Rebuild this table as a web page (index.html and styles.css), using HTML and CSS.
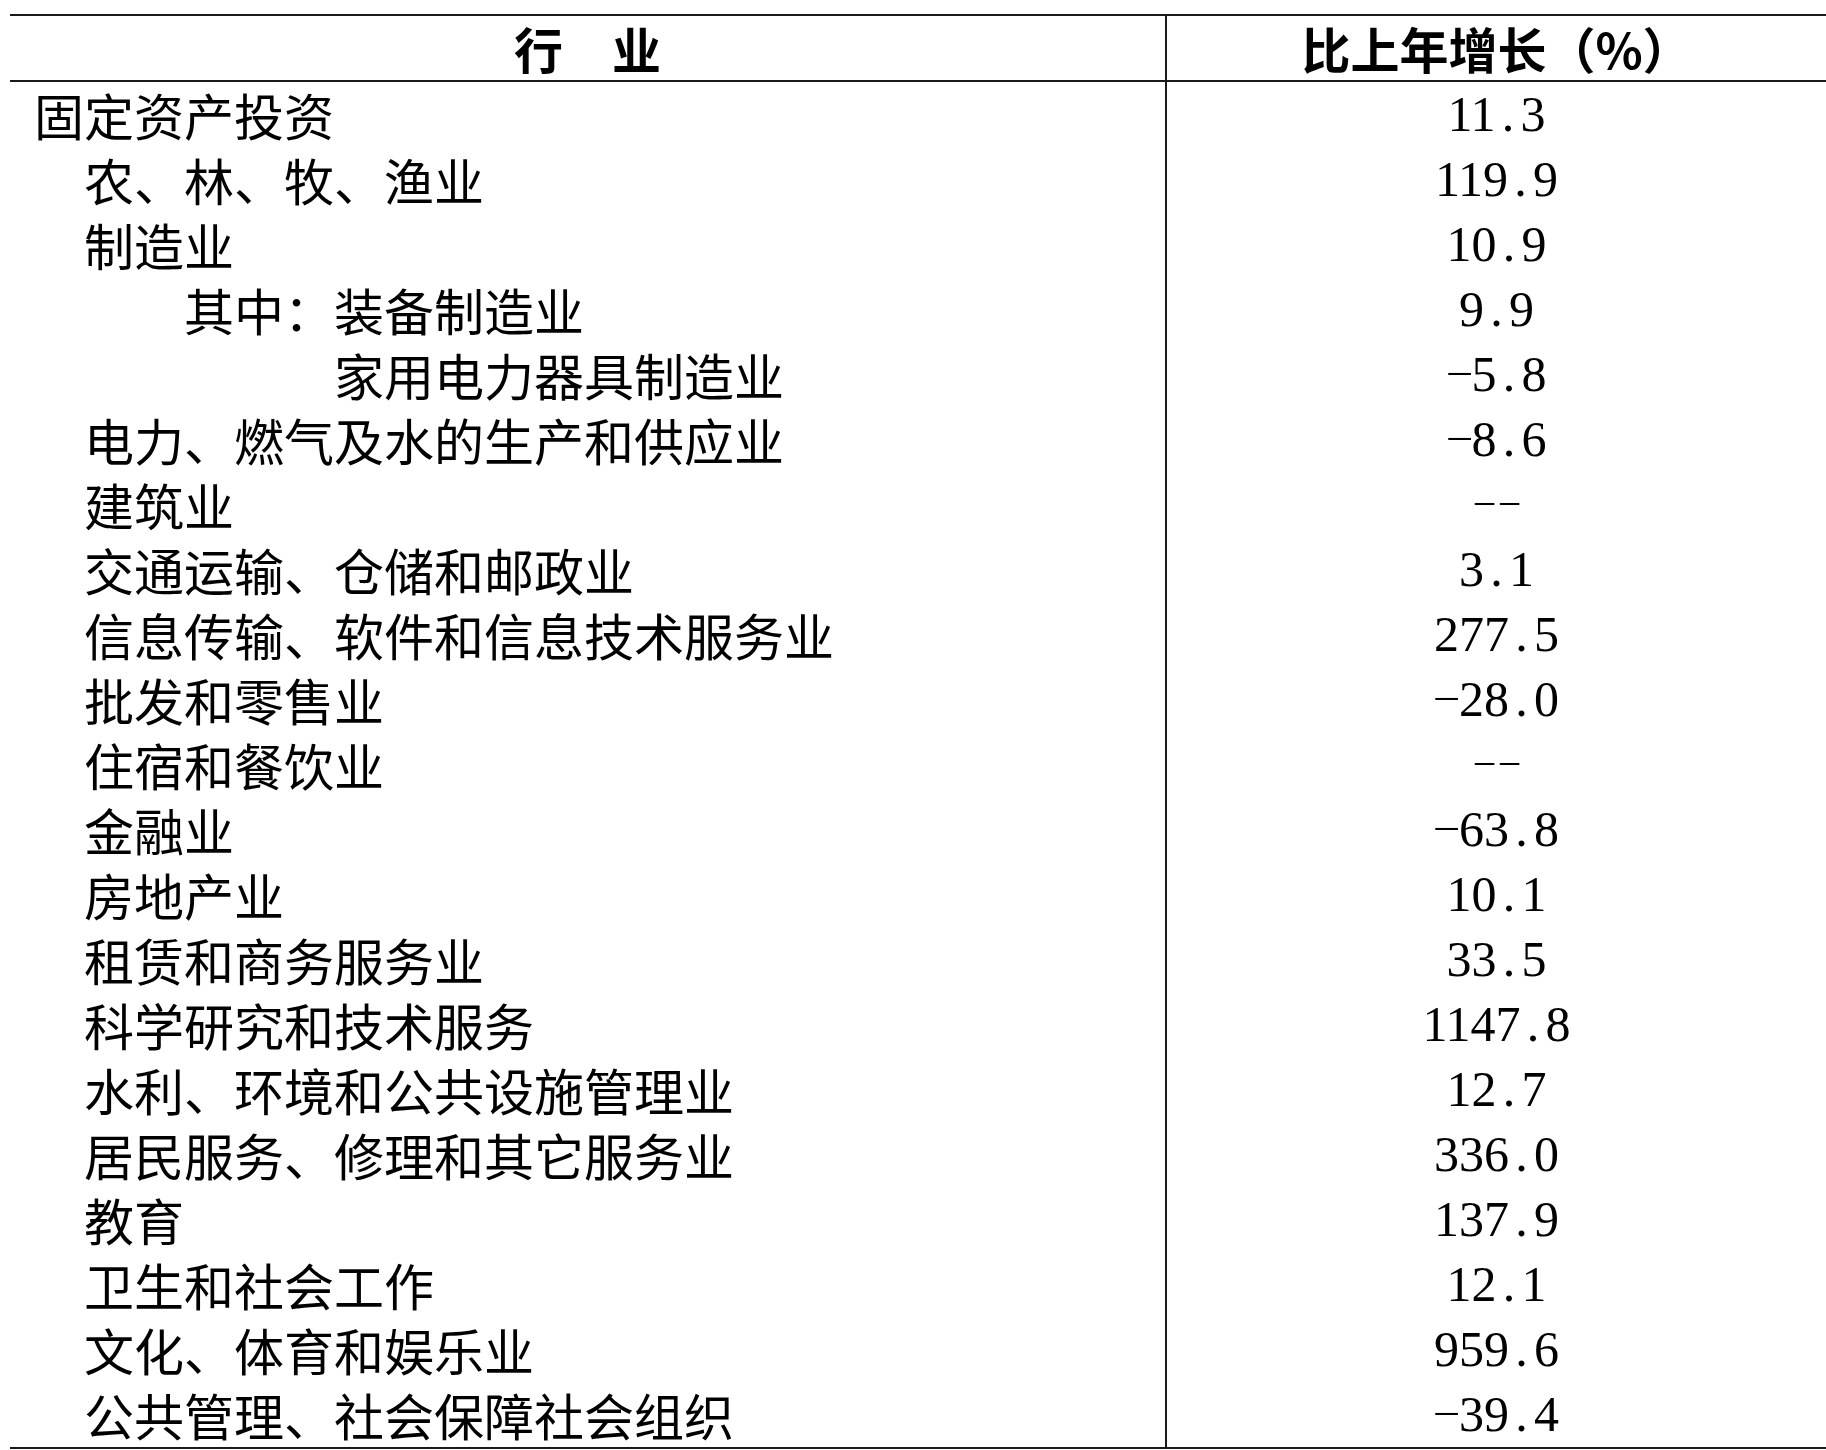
FILE: index.html
```html
<!DOCTYPE html>
<html lang="zh-CN">
<head>
<meta charset="utf-8">
<title>固定资产投资 比上年增长</title>
<link rel="stylesheet" href="styles.css">
</head>
<body>
<div class="sheet">
  <div class="row head">
    <div class="label center">行　业</div>
    <div class="val">比上年增长（%）</div>
  </div>
  <div class="row"><div class="label">固定资产投资</div><div class="val num">11<span class="dot">.</span>3</div></div>
  <div class="row"><div class="label l1">农、林、牧、渔业</div><div class="val num">119<span class="dot">.</span>9</div></div>
  <div class="row"><div class="label l1">制造业</div><div class="val num">10<span class="dot">.</span>9</div></div>
  <div class="row"><div class="label l3">其中：装备制造业</div><div class="val num">9<span class="dot">.</span>9</div></div>
  <div class="row"><div class="label l6">家用电力器具制造业</div><div class="val num"><span class="dash">-</span>5<span class="dot">.</span>8</div></div>
  <div class="row"><div class="label l1">电力、燃气及水的生产和供应业</div><div class="val num"><span class="dash">-</span>8<span class="dot">.</span>6</div></div>
  <div class="row"><div class="label l1">建筑业</div><div class="val num"><span class="dash pair">-</span><span class="dash pair">-</span></div></div>
  <div class="row"><div class="label l1">交通运输、仓储和邮政业</div><div class="val num">3<span class="dot">.</span>1</div></div>
  <div class="row"><div class="label l1">信息传输、软件和信息技术服务业</div><div class="val num">277<span class="dot">.</span>5</div></div>
  <div class="row"><div class="label l1">批发和零售业</div><div class="val num"><span class="dash">-</span>28<span class="dot">.</span>0</div></div>
  <div class="row"><div class="label l1">住宿和餐饮业</div><div class="val num"><span class="dash pair">-</span><span class="dash pair">-</span></div></div>
  <div class="row"><div class="label l1">金融业</div><div class="val num"><span class="dash">-</span>63<span class="dot">.</span>8</div></div>
  <div class="row"><div class="label l1">房地产业</div><div class="val num">10<span class="dot">.</span>1</div></div>
  <div class="row"><div class="label l1">租赁和商务服务业</div><div class="val num">33<span class="dot">.</span>5</div></div>
  <div class="row"><div class="label l1">科学研究和技术服务</div><div class="val num">1147<span class="dot">.</span>8</div></div>
  <div class="row"><div class="label l1">水利、环境和公共设施管理业</div><div class="val num">12<span class="dot">.</span>7</div></div>
  <div class="row"><div class="label l1">居民服务、修理和其它服务业</div><div class="val num">336<span class="dot">.</span>0</div></div>
  <div class="row"><div class="label l1">教育</div><div class="val num">137<span class="dot">.</span>9</div></div>
  <div class="row"><div class="label l1">卫生和社会工作</div><div class="val num">12<span class="dot">.</span>1</div></div>
  <div class="row"><div class="label l1">文化、体育和娱乐业</div><div class="val num">959<span class="dot">.</span>6</div></div>
  <div class="row"><div class="label l1">公共管理、社会保障社会组织</div><div class="val num"><span class="dash">-</span>39<span class="dot">.</span>4</div></div>
</div>
</body>
</html>
```
FILE: styles.css
```css
html, body {
  margin: 0;
  padding: 0;
  background: #ffffff;
}

body {
  width: 1826px;
  height: 1450px;
  overflow: hidden;
  color: #000000;
  font-family: "Noto Sans CJK SC", "Noto Sans", sans-serif;
}

.sheet {
  margin: 14px 0 0 10px;
  width: 1816px;
  border-top: 2px solid #1a1a1a;
  border-bottom: 2px solid #1a1a1a;
}

.row {
  display: grid;
  grid-template-columns: 1155px 1fr;
  height: 65px;
}

.row.head {
  height: 64px;
  border-bottom: 2px solid #1a1a1a;
}

.label {
  font-size: 50px;
  line-height: 65px;
  font-weight: 400;
  padding-left: 24px;
  white-space: nowrap;
}

.head .label,
.head .val {
  font-weight: 700;
  line-height: 64px;
  font-size: 49px;
}

.label.center {
  padding-left: 0;
  text-align: center;
}

.label.l1 { padding-left: 74px; }
.label.l3 { padding-left: 174px; }
.label.l6 { padding-left: 324px; }

.val {
  border-left: 2px solid #1a1a1a;
  text-align: center;
  font-size: 50px;
  line-height: 65px;
  white-space: nowrap;
}

.val.num {
  font-family: "Liberation Serif", serif;
}

.dot {
  display: inline-block;
  width: 0.5em;
  text-align: center;
}

.dash {
  display: inline-block;
  width: 0.5em;
  text-align: center;
  transform: translateY(-4px) scale(1.75, 0.55);
}

.dash.pair {
  transform: translateY(-4px) scale(1.5, 0.55);
}
```
